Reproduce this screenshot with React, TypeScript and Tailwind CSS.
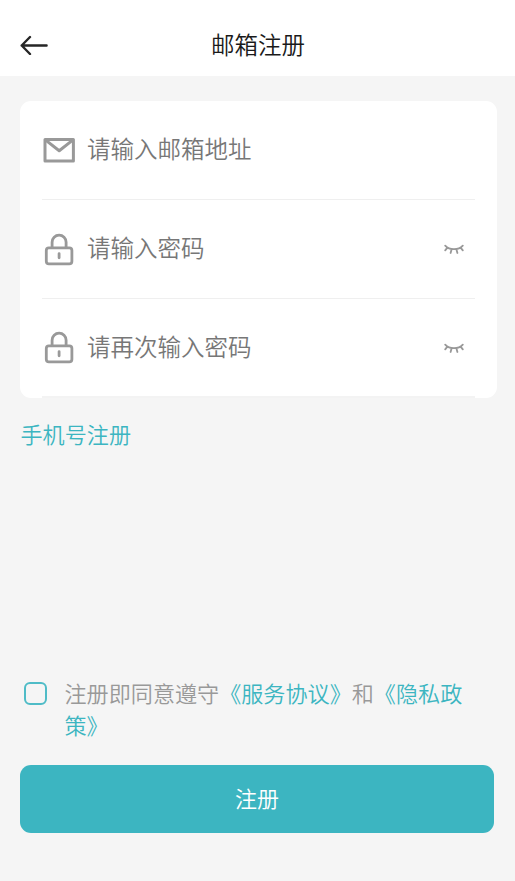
import { useState } from "react";

const FONT = "font-['Noto_Sans_CJK_SC',sans-serif]";

const FIELDS = [
  { id: "email", type: "email", placeholder: "请输入邮箱地址", icon: MailIcon },
  { id: "password", type: "password", placeholder: "请输入密码", icon: LockIcon },
  { id: "confirm", type: "password", placeholder: "请再次输入密码", icon: LockIcon },
];

export default function App() {
  const [agreed, setAgreed] = useState(false);

  return (
    <div className={`flex h-[881px] w-[515px] flex-col overflow-hidden bg-[#f5f5f5] font-[350] ${FONT}`}>
      <header className="grid h-[76px] shrink-0 grid-cols-[60px_1fr_60px] items-center bg-white pt-[14px]">
        <button type="button" className="pl-5">
          <BackIcon />
        </button>
        <h1 className="pb-[2px] pl-px text-center text-[23.5px] leading-[34px] font-[350] text-[#1a1a1a]">邮箱注册</h1>
      </header>

      <main className="flex flex-1 flex-col px-5 pt-[25px]">
        <div className="mr-[-1.5px] h-[297px] rounded-[11px] bg-white px-[22px]">
          {FIELDS.map((f) => (
            <label
              key={f.id}
              className="flex h-[99px] items-center border-b border-[#efefef] last:border-b-2 last:border-[#f3f3f3]"
            >
              <f.icon />
              <input
                type={f.type}
                placeholder={f.placeholder}
                className="ml-3 min-w-0 flex-1 pb-[4px] text-[23.5px] leading-[36px] outline-none placeholder:text-[#777]"
              />
              {f.type === "password" && <EyeClosedIcon />}
            </label>
          ))}
        </div>

        <a className="mt-[18px] ml-[0.5px] self-start text-[22.1px] leading-[34px] text-[#3cb5c1]">手机号注册</a>

        <div className="mt-auto flex pl-1">
          <input
            type="checkbox"
            checked={agreed}
            onChange={(e) => setAgreed(e.target.checked)}
            className="mt-[6px] size-[23px] shrink-0 appearance-none rounded-[6px] border-2 border-[#4fbcc7] checked:bg-[#3cb5c1]"
          />
          <p className="ml-[17.5px] w-[404px] text-[22.1px] leading-[32px] text-[#999]">
            注册即同意遵守<span className="text-[#3cb5c1]">《服务协议》</span>和
            <span className="text-[#3cb5c1]">《隐私政策》</span>
          </p>
        </div>

        <button
          type="button"
          className="mt-[25px] mb-[48px] h-[68px] w-[474px] shrink-0 rounded-[11px] bg-[#3cb5c1] pb-[4px] text-[22px] text-white"
        >
          注册
        </button>
      </main>
    </div>
  );
}

function BackIcon() {
  return (
    <svg
      width="28"
      height="20"
      viewBox="0 0 28 20"
      fill="none"
      stroke="#262626"
      strokeWidth="2.4"
      strokeLinecap="round"
      strokeLinejoin="round"
    >
      <path d="M10 2 1.7 10.5 10 19M1.7 10.5H26.6" />
    </svg>
  );
}

function MailIcon() {
  return (
    <svg width="33" height="33" viewBox="0 0 33 33" fill="none" stroke="#999" strokeWidth="3" strokeLinejoin="round">
      <rect x="3" y="5.6" width="28.4" height="21.4" />
      <path d="m4 6.4 13.2 10.4L30.4 6.4" />
    </svg>
  );
}

function LockIcon() {
  return (
    <svg width="33" height="33" viewBox="0 0 33 33" fill="none" stroke="#999" strokeWidth="2.8" strokeLinecap="round">
      <rect x="4.3" y="14.8" width="25.6" height="16" rx="2.6" />
      <path d="M10.1 14.5V9.2a7 7 0 0 1 14 0v5.3M17.1 20.6v4.2" />
    </svg>
  );
}

function EyeClosedIcon() {
  return (
    <svg
      width="20"
      height="12"
      viewBox="0 0 20 12"
      fill="none"
      stroke="#999"
      strokeWidth="1.8"
      strokeLinecap="round"
      className="mr-[10.5px]"
    >
      <path d="M1.2 2.6Q4.5 6.2 10 6.2T18.8 2.6M3.4 4.6 1.2 7.4M7.6 6.2l-1 3.8M12.4 6.2l1 3.8M16.6 4.6l2.2 2.8" />
    </svg>
  );
}
